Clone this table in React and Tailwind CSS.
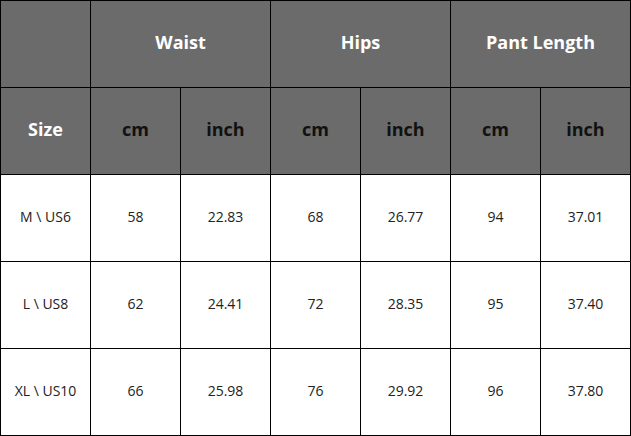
import React from 'react'

const rows = [
  ['M \\ US6', '58', '22.83', '68', '26.77', '94', '37.01'],
  ['L \\ US8', '62', '24.41', '72', '28.35', '95', '37.40'],
  ['XL \\ US10', '66', '25.98', '76', '29.92', '96', '37.80']
]

const groups = ['Waist', 'Hips', 'Pant Length']

export default function App() {
  return (
    <div
      className="grid w-[631px] grid-cols-[repeat(7,89px)] grid-rows-[repeat(5,86px)] gap-px bg-black p-px"
      style={{ fontFamily: '"Open Sans", "Noto Sans", sans-serif' }}
    >
      <div className="bg-[#6b6b6b]" />
      {groups.map(g => (
        <div
          key={g}
          className="col-span-2 flex items-center justify-center bg-[#6b6b6b] pb-[4px] text-[18px] font-bold text-white"
        >
          {g}
        </div>
      ))}

      <div className="flex items-center justify-center bg-[#6b6b6b] pb-[4px] text-[18px] font-bold text-white">
        Size
      </div>
      {groups.flatMap(g => ['cm', 'inch']).map((u, i) => (
        <div
          key={i}
          className="flex items-center justify-center bg-[#6b6b6b] pb-[4px] text-[18px] font-bold text-[#111]"
        >
          {u}
        </div>
      ))}

      {rows.map(r =>
        r.map((c, i) => (
          <div
            key={r[0] + i}
            className="flex items-center justify-center bg-white pb-[3px] text-[14px] text-[#222]"
          >
            {c}
          </div>
        ))
      )}
    </div>
  )
}
